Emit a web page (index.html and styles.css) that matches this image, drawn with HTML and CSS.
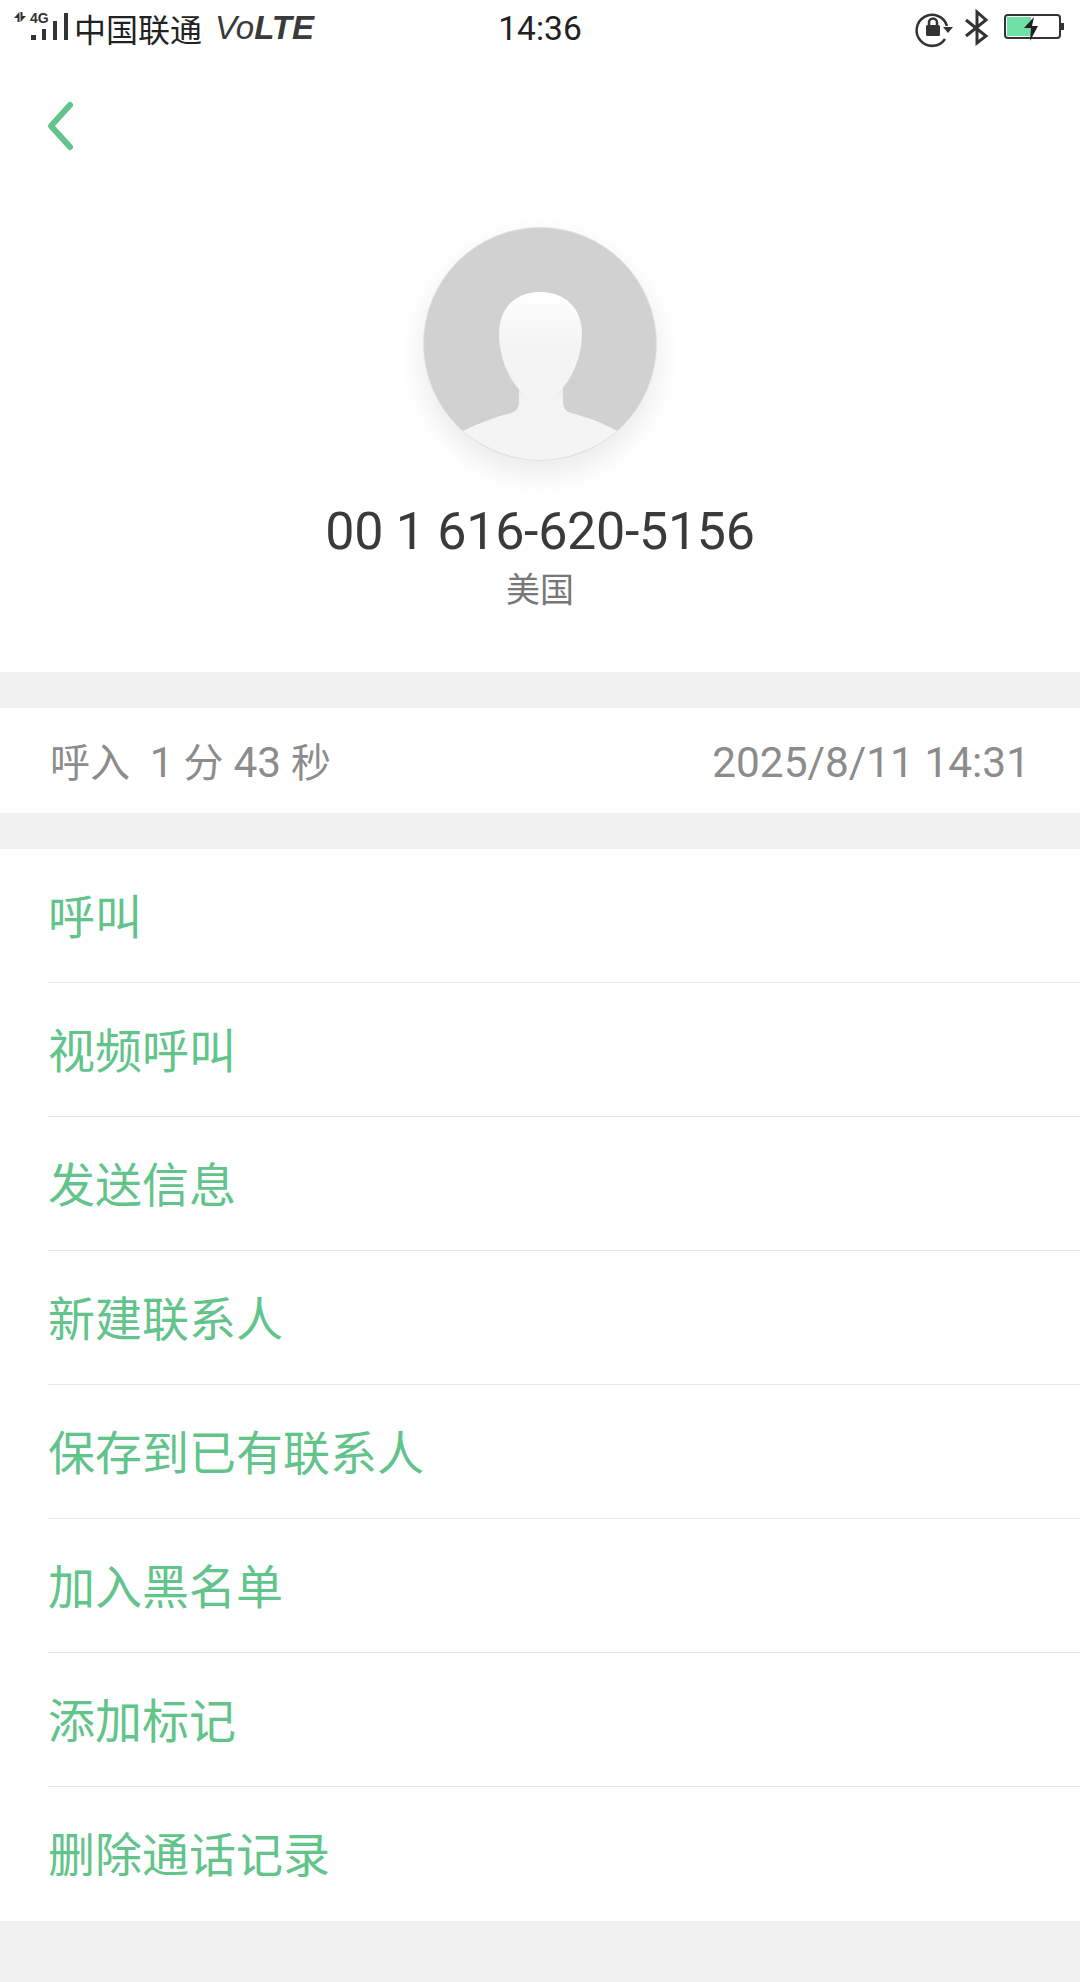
FILE: index.html
```html
<!DOCTYPE html>
<html>
<head>
    <title>通话详情</title>
    <link rel="stylesheet" href="styles.css">
</head>
<body>
    <div class="status-bar">
        <div class="status-left">
            <svg width="70" height="56" viewBox="0 0 70 56">
                <path d="M19.500 12L14 18h3.500v4h2zM20.500 22l5.500-6h-3.500v-4h-2z" fill="#333"/>
                <text x="30" y="23" class="net-type">4G</text>
                <rect x="31" y="35" width="5" height="5" fill="#333"/>
                <rect x="42" y="29" width="4" height="11" fill="#333"/>
                <rect x="53" y="21" width="4" height="19" fill="#333"/>
                <rect x="64" y="13" width="4" height="27" fill="#333"/>
            </svg>
            <span class="carrier">中国联通</span>
            <span class="volte">Vo<b>LTE</b></span>
        </div>
        <div class="clock">14:36</div>
        <div class="status-right">
            <svg width="40" height="56" viewBox="914 0 40 56">
                <path d="M945 39a15.500 15.500 0 1 1 2-13" fill="none" stroke="#333" stroke-width="2.500"/>
                <path d="M943 27h10l-5 6z" fill="#333"/>
                <rect x="926" y="25" width="14" height="11" rx="1.500" fill="#333"/>
                <path d="M929 25v-2.500a4 4 0 0 1 8 0V25" fill="none" stroke="#333" stroke-width="2.500"/>
            </svg>
            <svg width="28" height="56" viewBox="962 0 28 56">
                <path d="M966 20l20 16-9 7V12l9 8-20 16" fill="none" stroke="#333" stroke-width="3"/>
            </svg>
            <svg width="64" height="56" viewBox="1002 0 64 56">
                <rect x="1005" y="15" width="55" height="23" rx="3" fill="#fff" stroke="#333" stroke-width="2"/>
                <rect x="1007" y="17" width="24" height="19" fill="#6fe0a6"/>
                <rect x="1061" y="23" width="3" height="7" fill="#333"/>
                <path d="M1034 17l-10 11h7l-1 13 8-15h-6z" fill="#222"/>
            </svg>
        </div>
    </div>

    <div class="top-nav">
        <svg width="30" height="52" viewBox="0 0 30 52">
            <path d="M24 5L5 26l19 21" fill="none" stroke="#62c48a" stroke-width="6" stroke-linecap="round" stroke-linejoin="round"/>
        </svg>
    </div>

    <div class="profile">
        <div class="avatar">
            <svg width="234" height="234" viewBox="0 0 234 234">
                <defs>
                    <linearGradient id="faceFill" x1="0" y1="0" x2="0" y2="1">
                        <stop offset="0" stop-color="#ffffff"/>
                        <stop offset="0.5" stop-color="#f4f4f4"/>
                    </linearGradient>
                    <linearGradient id="bodyFill" x1="0" y1="0" x2="0" y2="1">
                        <stop offset="0" stop-color="#e6e6e6"/>
                        <stop offset="0.3" stop-color="#f4f4f4"/>
                    </linearGradient>
                </defs>
                <circle cx="117" cy="117" r="116.500" fill="#d1d1d1" stroke="#e2e2e2"/>
                <path d="M40 204c16-8 32-14 48-18 6-2 8-6 8-12v-24h44v24c0 6 2 10 8 12 16 4 32 10 46 18-21 18-50 29-77 29s-56-11-77-29z" fill="url(#bodyFill)"/>
                <path d="M117 65c24 0 42 15 42 42 0 30-19 66-42 66s-41-36-41-66c0-27 17-42 41-42z" fill="url(#faceFill)"/>
            </svg>
        </div>
        <div class="number">00 1 616-620-5156</div>
        <div class="region">美国</div>
    </div>

    <div class="detail">
        <span class="call-info">呼入&nbsp;&nbsp;<span class="num">1</span> 分 <span class="num">43</span> 秒</span>
        <span class="num">2025/8/11 14:31</span>
    </div>

    <ul class="actions">
        <li>呼叫</li>
        <li>视频呼叫</li>
        <li>发送信息</li>
        <li>新建联系人</li>
        <li>保存到已有联系人</li>
        <li>加入黑名单</li>
        <li>添加标记</li>
        <li>删除通话记录</li>
    </ul>
</body>
</html>
```

FILE: styles.css
```css
body {
    margin: 0;
    height: 1982px;
    overflow: hidden;
    font-family: Roboto, "Noto Sans CJK SC", sans-serif;
    background-color: #f1f1f1;
}

.status-bar {
    display: flex;
    justify-content: space-between;
    align-items: center;
    position: relative;
    height: 56px;
    padding-right: 14px;
    background-color: #fff;
    color: #222;
}

.status-left {
    display: flex;
    align-items: center;
}

.net-type {
    font-family: "Liberation Sans", sans-serif;
    font-size: 14px;
    font-weight: bold;
    fill: #333;
}

.carrier {
    margin-left: 4px;
    font-family: "Noto Sans CJK SC", sans-serif;
    font-size: 32px;
    line-height: 56px;
}

.volte {
    margin-left: 13px;
    font-family: "Liberation Sans", sans-serif;
    font-size: 33px;
    font-style: italic;
    line-height: 58px;
    color: #3a3a3a;
}

.clock {
    position: absolute;
    left: 0;
    right: 0;
    text-align: center;
    font-size: 33.500px;
}

.status-right {
    display: flex;
    align-items: center;
    gap: 8px;
}

.status-right svg:last-child {
    margin-left: 4px;
}

.top-nav {
    height: 60px;
    padding: 40px 0 0 46px;
    background-color: #fff;
}

.top-nav svg {
    display: block;
    margin-top: 4px;
}

.profile {
    display: flex;
    flex-direction: column;
    align-items: center;
    height: 516px;
    padding-top: 71px;
    box-sizing: border-box;
    background-color: #fff;
}

.avatar {
    width: 234px;
    height: 234px;
    border-radius: 50%;
    box-shadow: 0 12px 28px rgba(0, 0, 0, 0.09);
}

.avatar svg {
    display: block;
}

.number {
    margin-top: 39px;
    font-size: 52px;
    letter-spacing: -0.300px;
    line-height: 64px;
    color: #3a3a3a;
}

.region {
    margin-top: 1px;
    font-size: 34px;
    line-height: 50px;
    color: #777;
}

.detail {
    display: flex;
    justify-content: space-between;
    align-items: baseline;
    height: 101px;
    margin-top: 36px;
    padding: 4px 50px 0;
    background-color: #fff;
    font-size: 40px;
    line-height: 101px;
    color: #8c8c8c;
}

.num {
    font-size: 42.400px;
}

.actions {
    list-style: none;
    margin: 36px 0 0;
    padding: 0 0 0 48px;
    background-color: #fff;
}

.actions li {
    height: 128px;
    padding-top: 5px;
    line-height: 128px;
    border-bottom: 1px solid #e9e9e9;
    font-size: 47px;
    color: #62c48a;
}

.actions li:last-child {
    border-bottom: none;
    height: 129px;
}
```
